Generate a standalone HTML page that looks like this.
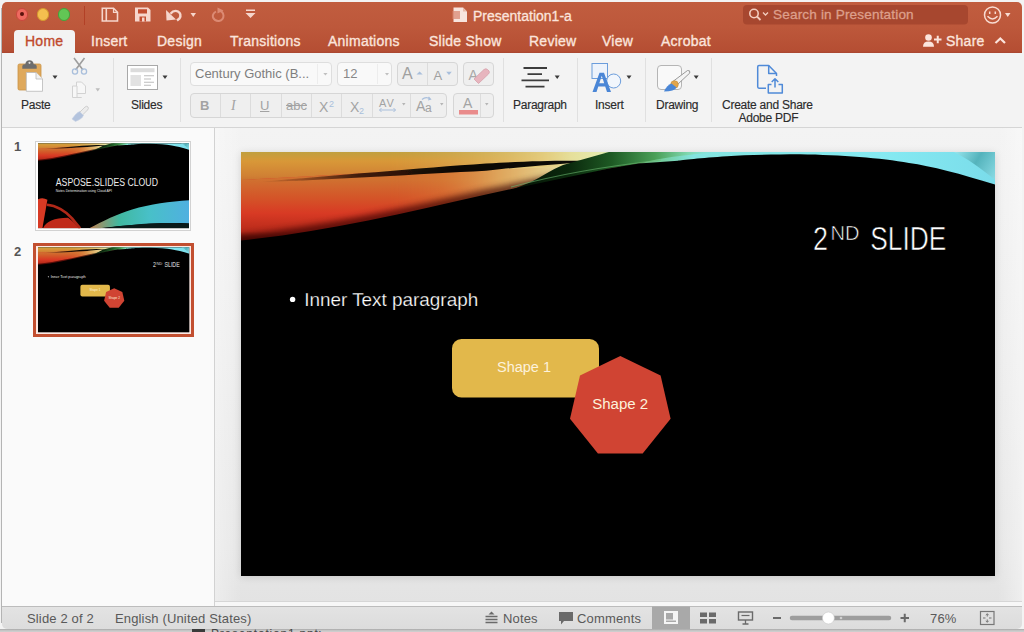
<!DOCTYPE html>
<html><head><meta charset="utf-8">
<style>
*{box-sizing:border-box;margin:0;padding:0}
html,body{width:1024px;height:632px;overflow:hidden;background:#f3f3f3;font-family:"Liberation Sans",sans-serif}
.a{position:absolute}
svg{position:absolute;overflow:visible}
#deskbot{left:0;top:629px;width:1024px;height:3px;background:linear-gradient(#a8a8a8,#c4c4c4 1.5px,#d2d2d2)}
#winshadow{left:1px;top:8px;width:1px;height:615px;background:#b4b4b4}
#win{left:2px;top:2px;width:1020px;height:627px;border-radius:5px;overflow:hidden;background:#f3f3f3}
#title{left:2px;top:2px;width:1020px;height:51px;background:linear-gradient(#c15d3f,#bd583b 25px,#b54e33 49px,#a84530 51px);border-radius:5px 5px 0 0}
.tl{width:12.5px;height:12.5px;border-radius:50%;top:8px}
.tab{top:33.3px;font-size:14px;color:#fbe4dc;white-space:nowrap;letter-spacing:0.25px;line-height:16px;-webkit-text-stroke:0.35px currentColor}
#ribbon{left:2px;top:53px;width:1020px;height:75px;background:#f3f3f3;border-bottom:1px solid #d5d5d5}
.sep{top:58px;width:1px;height:64px;background:#e0e0e0}
.lbl{top:97.5px;font-size:12px;color:#2b2b2b;white-space:nowrap;line-height:14px;letter-spacing:-0.25px;-webkit-text-stroke:0.15px currentColor}
.box{background:#f9f9f9;border:1px solid #dedede;border-radius:4px}
.btn{background:#efefef;border:1px solid #d6d6d6;border-radius:4px}
.vd{width:1px;background:#dcdcdc}
.gt{color:#7e7e7e;white-space:nowrap;line-height:14px}
#panel{left:2px;top:128px;width:212px;height:478px;background:#fafafa}
#pline{left:214px;top:128px;width:1px;height:478px;background:#d2d2d2}
#main{left:215px;top:128px;width:807px;height:473px;background:linear-gradient(90deg,rgba(255,255,255,0.35),rgba(255,255,255,0) 26px),linear-gradient(270deg,rgba(255,255,255,0.4),rgba(255,255,255,0) 24px),linear-gradient(#f3f3f3 0,#eeeeee 200px,#e7e7e7 420px,#e3e3e3 473px)}
#status{left:2px;top:606px;width:1020px;height:23px;background:linear-gradient(#e3e3e3,#dcdcdc);border-top:1px solid #bcbcbc;border-radius:0 0 5px 5px}
.st{top:611px;font-size:13px;color:#595959;white-space:nowrap;line-height:15px;letter-spacing:0.15px}
#slide{left:241px;top:152px;width:754px;height:424px;background:#000;overflow:hidden}
</style></head><body>
<div id="winshadow" class="a"></div>
<div id="deskbot" class="a"></div>
<div id="win" class="a"></div>
<div id="title" class="a"></div>
<div class="a tl" style="left:15.6px;background:#ee6a5f;border:1px solid #c9473d"></div>
<div class="a" style="left:19.8px;top:12.2px;width:4px;height:4px;border-radius:50%;background:#5a120c"></div>
<div class="a tl" style="left:36.7px;background:#f5bf4f;border:1px solid #d49a2e"></div>
<div class="a tl" style="left:57.6px;background:#62c655;border:1px solid #43a33a"></div>
<div class="a" style="left:84px;top:6px;width:1px;height:19px;background:#b24026"></div>

<div class="a" style="left:14px;top:30px;width:61px;height:24px;background:#f3f3f3;border-radius:4px 4px 0 0"></div>
<div class="a tab" style="left:25px;color:#c04a2d">Home</div>
<div class="a tab" style="left:91px">Insert</div>
<div class="a tab" style="left:157px">Design</div>
<div class="a tab" style="left:230px">Transitions</div>
<div class="a tab" style="left:328px">Animations</div>
<div class="a tab" style="left:429px">Slide Show</div>
<div class="a tab" style="left:529px">Review</div>
<div class="a tab" style="left:602px">View</div>
<div class="a tab" style="left:661px">Acrobat</div>


<!-- title bar icons -->
<svg style="left:0;top:0" width="1024" height="53">
 <g fill="none" stroke="#f6d6cc" stroke-width="1.6">
  <path d="M102.3 8.3 H113.5 L117.5 12.3 V21 H102.3 Z"/>
  <path d="M106.3 8.3 V21"/>
  <path d="M113.5 8.3 V12.3 H117.5" stroke-width="1.2"/>
 </g>
 <path fill="#f6d6cc" d="M135 7.5 H148 L150.5 10 V21.5 H135 Z"/>
 <path fill="#c24d30" d="M138 9.2 H147 V13.5 H138 Z M139.5 16.5 H146 V21.5 H139.5 Z"/>
 <path fill="#f6d6cc" d="M142 17.5 H144.5 V21.5 H142 Z"/>
 <path fill="none" stroke="#f6d6cc" stroke-width="2.4" d="M170.5 13.8 Q174 9.5 178 11.5 Q182 14 179.5 18.5 L177 20.5"/>
 <path fill="#f6d6cc" d="M166 10 L166.5 20.5 L176 19.5 Z"/>
 <path fill="#f6d6cc" d="M190.5 13 H196 L193.25 17 Z"/>
 <path fill="none" stroke="#dc8a73" stroke-width="2" d="M216 11.5 Q212 14 213 17.5 Q215 21.5 219 21 Q223.5 20 223.5 15.5 Q223 11 218.5 10.5"/>
 <path fill="#dc8a73" d="M217.5 7.5 L223.5 10.5 L217.5 13.5 Z"/>
 <path fill="#f6d6cc" d="M246 9.5 H255 V11 H246 Z M245.5 13 H255.5 L250.5 18 Z"/>
 <!-- title doc icon -->
 <path fill="#f7e4de" d="M453.5 7.5 H463 L467 11.5 V22 H453.5 Z"/>
 <path fill="#e9b8a8" d="M463 7.5 V11.5 H467 Z"/>
 <path fill="#d98a74" d="M452.5 11 H460 V19 H452.5 Z" opacity="0.75"/>
 <!-- search -->
 <rect x="743" y="5" width="225" height="19.5" rx="4" fill="#a7472f"/>
 <circle cx="754" cy="13.5" r="4.2" fill="none" stroke="#f3cdbf" stroke-width="1.6"/>
 <path d="M757 16.5 L760.5 20" stroke="#f3cdbf" stroke-width="1.8"/>
 <path d="M763 12.5 L765.5 15 L768 12.5" fill="none" stroke="#f3cdbf" stroke-width="1.3"/>
 <!-- smiley -->
 <circle cx="992.5" cy="15" r="8" fill="none" stroke="#f8dcd2" stroke-width="1.5"/>
 <path d="M989.7 11.5 V14 M995.3 11.5 V14" stroke="#f8dcd2" stroke-width="1.5"/>
 <path d="M987.5 16.3 Q992.5 21.5 997.5 16.3" fill="none" stroke="#f8dcd2" stroke-width="1.5"/>
 <path fill="#f8dcd2" d="M1005 13 H1010.5 L1007.75 17 Z"/>
 <!-- share -->
 <circle cx="928.5" cy="37.5" r="3.3" fill="#fbe4dc"/>
 <path fill="#fbe4dc" d="M923 46.8 Q923 41.5 928.5 41.5 Q934 41.5 934 46.8 Z"/>
 <path d="M934 39.5 H941.5 M937.75 35.7 V43.3" stroke="#fbe4dc" stroke-width="2"/>
 <path d="M995.5 43 L1000.3 38.5 L1005 43" fill="none" stroke="#fbe4dc" stroke-width="2.2"/>
</svg>
<div class="a" style="left:473px;top:8.5px;font-size:14px;line-height:14px;color:#fbe4dc;letter-spacing:0px;-webkit-text-stroke:0.3px currentColor">Presentation1-a</div>
<div class="a" style="left:773px;top:8px;font-size:13.6px;line-height:14px;color:#dd9f8b;letter-spacing:0.15px;-webkit-text-stroke:0.3px currentColor">Search in Presentation</div>
<div class="a tab" style="left:946px">Share</div>

<div id="ribbon" class="a"></div>

<!-- ribbon separators -->
<div class="a sep" style="left:113px"></div>
<div class="a sep" style="left:180px"></div>
<div class="a sep" style="left:503px"></div>
<div class="a sep" style="left:577px"></div>
<div class="a sep" style="left:645px"></div>
<div class="a sep" style="left:711px"></div>
<svg style="left:0;top:0" width="1024" height="130">
 <!-- paste -->
 <rect x="18" y="64" width="23" height="26" rx="1.5" fill="#dfa95c" stroke="#c99245" stroke-width="0.8"/>
 <path d="M22.3 68.8 V66.3 Q22.3 64.2 24.5 64.2 H25.3 Q25.8 60.3 29.5 60.3 Q33.2 60.3 33.7 64.2 H34.5 Q36.7 64.2 36.7 66.3 V68.8 Z" fill="#6d6d6d"/>
 <circle cx="29.5" cy="62.8" r="1.1" fill="#e0e0e0"/>
 <path d="M26.3 72.5 H36 L42.5 79 V91.3 H26.3 Z" fill="#ffffff" stroke="#b9b9b9" stroke-width="0.8"/>
 <path d="M36 72.5 V79 H42.5" fill="#f2f2f2" stroke="#b9b9b9" stroke-width="0.8"/>
 <path d="M52.5 75.5 H57.5 L55 79 Z" fill="#3a3a3a"/>
 <!-- scissors -->
 <path d="M74 58 L83 70 M84.5 58 L75.5 70" stroke="#9d9d9d" stroke-width="1.6"/>
 <circle cx="75" cy="71.5" r="2.6" fill="none" stroke="#a9bfdc" stroke-width="1.3"/>
 <circle cx="84" cy="71.5" r="2.6" fill="none" stroke="#a9bfdc" stroke-width="1.3"/>
 <!-- copy -->
 <path d="M76.5 82 H81.5 L85.5 86 V93.5 H76.5 Z" fill="#f7f7f7" stroke="#d2d2d2" stroke-width="1"/>
 <path d="M72.5 86 H77 V97.5 H81.5 V97.5 H72.5 Z" fill="#f7f7f7" stroke="#d2d2d2" stroke-width="1"/>
 <path d="M95.5 88.2 H100 L97.75 91.5 Z" fill="#bdbdbd"/>
 <!-- brush -->
 <path d="M80 112 L85 107 Q87 105.5 88 107 Q89 108.5 87.5 110 L82.5 115" fill="#ececec" stroke="#cfcfcf" stroke-width="1"/>
 <path d="M72 119 Q76 113 79.5 111.5 L83.5 115.5 Q82 119 75.5 121.5 Z" fill="#b3c3dd" stroke="#c8d2e4" stroke-width="0.6"/>
 <!-- slides icon -->
 <rect x="127.5" y="65.5" width="30" height="24" fill="#ffffff" stroke="#a8a8a8" stroke-width="1"/>
 <rect x="130.5" y="68.2" width="24" height="4" fill="#dcdcdc"/>
 <rect x="130.5" y="75" width="10.5" height="11" fill="#e2e2e2"/>
 <path d="M144 75.8 H154 M144 79 H151 M144 82.2 H154 M144 85.3 H151" stroke="#bdbdbd" stroke-width="1.1"/>
 <path d="M162.5 75.5 H167.5 L165 79 Z" fill="#3a3a3a"/>
 <!-- paragraph -->
 <path d="M523.5 68 H547 M527.5 74.2 H542 M521.5 80.3 H549 M525.5 86.6 H544.5" stroke="#3c3c3c" stroke-width="1.8"/>
 <path d="M554.7 75.5 H559.7 L557.2 79 Z" fill="#3a3a3a"/>
 <!-- insert -->
 <rect x="592" y="63.5" width="15.5" height="15" fill="#edf3fb" stroke="#6b9ddc" stroke-width="1"/>
 <circle cx="613.7" cy="81" r="7" fill="#f1f6fc" stroke="#6b9ddc" stroke-width="1"/>
 <path d="M592.5 92 L599.5 72.8 H604 L611 92 H607 L605.2 86.5 H598.3 L596.5 92 Z M599.3 83.3 H604.2 L601.75 75.8 Z" fill="#4a86d6" fill-rule="evenodd"/>
 <path d="M626.5 75.5 H631.5 L629 79 Z" fill="#3a3a3a"/>
 <!-- drawing -->
 <rect x="657.5" y="65.5" width="24" height="24" rx="3.5" fill="#f9f9f9" stroke="#b5b5b5" stroke-width="1"/>
 <path d="M687.5 70.5 Q690.5 70 689.8 73 L677.5 84.5 L673.5 81 Z" fill="#f4f4f4" stroke="#8e8e8e" stroke-width="0.9"/>
 <circle cx="674.5" cy="84.5" r="3.8" fill="#e1a54b" stroke="#c58b35" stroke-width="0.6"/>
 <path d="M664 91.5 Q667 85 671.5 83.5 L676.5 87.5 Q674.5 91.5 664 91.5 Z" fill="#4a86d6"/>
 <path d="M693.7 75.5 H698.7 L696.2 79 Z" fill="#3a3a3a"/>
 <!-- acrobat -->
 <g fill="none" stroke="#4f8ad8" stroke-width="1.5" stroke-linejoin="round">
  <path d="M766 88.2 H759 Q757.7 88.2 757.7 86.8 V67 Q757.7 65.6 759 65.6 H768.7 L776.5 73.6 V76"/>
  <path d="M768.7 65.6 V73.6 H776.5"/>
  <path d="M771.5 84.5 H768.3 V93 H782.3 V84.5 H778.5"/>
  <path d="M775 87.5 V79 M771.7 82 L775 78.7 L778.3 82"/>
 </g>
</svg>
<div class="a lbl" style="left:21px">Paste</div>
<div class="a lbl" style="left:131px">Slides</div>
<div class="a lbl" style="left:513px">Paragraph</div>
<div class="a lbl" style="left:595px">Insert</div>
<div class="a lbl" style="left:656px">Drawing</div>
<div class="a lbl" style="left:722px">Create and Share</div>
<div class="a lbl" style="left:738.5px;top:110.5px">Adobe PDF</div>
<!-- font group -->
<div class="a box" style="left:190px;top:62px;width:142px;height:24px"></div>
<div class="a vd" style="left:317px;top:64px;height:20px;background:#ededed"></div>
<div class="a gt" style="left:195px;top:67px;font-size:13px">Century Gothic (B...</div>
<div class="a box" style="left:337px;top:62px;width:55px;height:24px"></div>
<div class="a vd" style="left:377px;top:64px;height:20px;background:#ededed"></div>
<div class="a gt" style="left:343px;top:67px;font-size:13px;color:#888">12</div>
<div class="a btn" style="left:397px;top:62px;width:61px;height:24px"></div>
<div class="a vd" style="left:427px;top:63px;height:22px"></div>
<div class="a gt" style="left:402px;top:66px;font-size:16px;line-height:16px;color:#a0a0a0">A</div>
<div class="a gt" style="left:433.5px;top:69px;font-size:13px;line-height:13px;color:#a0a0a0">A</div>
<div class="a btn" style="left:463px;top:62px;width:31px;height:24px"></div>
<div class="a btn" style="left:190px;top:93px;width:257px;height:25px"></div>
<div class="a vd" style="left:220px;top:94px;height:23px"></div>
<div class="a vd" style="left:250px;top:94px;height:23px"></div>
<div class="a vd" style="left:281px;top:94px;height:23px"></div>
<div class="a vd" style="left:311px;top:94px;height:23px"></div>
<div class="a vd" style="left:341px;top:94px;height:23px"></div>
<div class="a vd" style="left:372px;top:94px;height:23px"></div>
<div class="a vd" style="left:410px;top:94px;height:23px"></div>
<div class="a btn" style="left:453px;top:93px;width:41px;height:25px"></div>
<div class="a vd" style="left:480px;top:94px;height:23px"></div>
<div class="a gt" style="left:200px;top:99px;font-size:13px;font-weight:bold;color:#a3a3a3">B</div>
<div class="a gt" style="left:231px;top:99px;font-size:14px;font-style:italic;font-family:'Liberation Serif';color:#a3a3a3">I</div>
<div class="a gt" style="left:260px;top:99px;font-size:13px;color:#a3a3a3;text-decoration:underline">U</div>
<div class="a gt" style="left:286px;top:99px;font-size:13px;color:#a3a3a3;text-decoration:line-through">abc</div>
<div class="a gt" style="left:319px;top:100px;font-size:14px;color:#a3a3a3">X</div>
<div class="a gt" style="left:329px;top:97px;font-size:9px;color:#a9bfdc">2</div>
<div class="a gt" style="left:350px;top:100px;font-size:14px;color:#a3a3a3">X</div>
<div class="a gt" style="left:359px;top:104px;font-size:9px;color:#a9bfdc">2</div>
<div class="a gt" style="left:379px;top:96px;font-size:11px;color:#a3a3a3;letter-spacing:1px">AV</div>
<div class="a gt" style="left:416px;top:99px;font-size:14px;color:#a3a3a3">A</div>
<div class="a gt" style="left:425px;top:101px;font-size:12px;color:#a3a3a3">a</div>
<div class="a gt" style="left:463px;top:96px;font-size:14px;color:#a3a3a3">A</div>
<svg style="left:0;top:0" width="1024" height="130">
 <path d="M323.3 73 H327.5 L325.4 75.5 Z M385 73 H389 L387 75.5 Z" fill="#c0c0c0"/>
 <path d="M416.5 74.5 L419.6 71.5 L422.7 74.5 Z" fill="#a9bfdc"/>
 <path d="M446.2 71.8 H451.8 L449 75 Z" fill="#a9bfdc"/>
 <path d="M379.5 110 H395.5 M381.5 108 L379.5 110 L381.5 112 M393.5 108 L395.5 110 L393.5 112" fill="none" stroke="#a9bfdc" stroke-width="1"/>
 <path d="M402 103 H405.5 L403.75 105.5 Z M440 103 H443.5 L441.75 105.5 Z M485 103 H488.5 L486.75 105.5 Z" fill="#b5b5b5"/>
 <path d="M422 99.5 Q426 96 430 99 M428.5 97 L430.5 99.2 L428 100" fill="none" stroke="#a9bfdc" stroke-width="1.2"/>
 <rect x="459" y="110" width="19" height="4.5" fill="#e98b8b"/>
 <text x="468.5" y="79.5" font-family="Liberation Sans" font-size="14" fill="#a8a8a8">A</text>
 <path d="M474 79 L484 69.5 Q486 68 487.5 69.5 L489 71 Q490 72.5 488.5 74 L478.5 83.5 Z" fill="#e7b5be" stroke="#d6a0aa" stroke-width="0.8"/>
</svg>

<div id="panel" class="a"></div>
<div id="pline" class="a"></div>
<div id="main" class="a"></div>
<div class="a" style="left:215px;top:601px;width:807px;height:1px;background:#d6d6d6"></div>
<div class="a" style="left:215px;top:602px;width:807px;height:4px;background:#f7f7f7"></div>
<div id="status" class="a"></div>

<svg style="left:0;top:0" width="1024" height="632">
 <!-- notes icon -->
 <path d="M491.5 611.5 L488.5 614.5 H494.5 Z" fill="#6a6a6a"/>
 <path d="M485.5 616.5 H497.5 M485.5 619.5 H497.5 M485.5 622.5 H497.5" stroke="#6a6a6a" stroke-width="1.3"/>
 <!-- comments icon -->
 <path d="M559 612 H573 V621 H564 L561 624.5 V621 H559 Z" fill="#6a6a6a"/>
 <!-- normal view (active) -->
 <rect x="652" y="606.5" width="38" height="22.5" fill="#a9a9a9"/>
 <rect x="664" y="611" width="14" height="13" fill="#f5f5f5"/>
 <rect x="666" y="613" width="7" height="6.5" fill="#a9a9a9"/>
 <rect x="666" y="620.5" width="10" height="1.5" fill="#a9a9a9"/>
 <!-- sorter -->
 <rect x="700" y="612.5" width="7" height="4.5" fill="#6a6a6a"/>
 <rect x="709" y="612.5" width="7" height="4.5" fill="#6a6a6a"/>
 <rect x="700" y="619" width="7" height="4.5" fill="#6a6a6a"/>
 <rect x="709" y="619" width="7" height="4.5" fill="#6a6a6a"/>
 <!-- presenter -->
 <rect x="738.5" y="612" width="14" height="8" fill="none" stroke="#6a6a6a" stroke-width="1.4"/>
 <path d="M741.5 615.5 H749.5" stroke="#6a6a6a" stroke-width="1.2"/>
 <path d="M745.5 620 V623.5 M742.5 624 H748.5" stroke="#6a6a6a" stroke-width="1.3"/>
 <!-- zoom -->
 <path d="M773 618 H781" stroke="#6a6a6a" stroke-width="2"/>
 <path d="M792 618 H889" stroke="#9d9d9d" stroke-width="4.5" stroke-linecap="round"/>
 <circle cx="841" cy="618" r="1.3" fill="#d0d0d0"/>
 <circle cx="828.4" cy="618" r="6" fill="#ffffff" stroke="#c8c8c8" stroke-width="0.6"/>
 <path d="M900.5 618 H909 M904.75 613.8 V622.2" stroke="#6a6a6a" stroke-width="2"/>
 <!-- fit -->
 <rect x="980.5" y="611.5" width="13.5" height="13" fill="none" stroke="#777" stroke-width="1.2"/>
 <path d="M987.25 614 V616.5 M987.25 619.5 V622 M983 618 H985.5 M989 618 H991.5" stroke="#777" stroke-width="1.1"/>
 <path d="M985.8 615.2 L987.25 613.6 L988.7 615.2 M985.8 620.8 L987.25 622.4 L988.7 620.8" fill="none" stroke="#777" stroke-width="0.9"/>
</svg>
<div class="a st" style="left:503px">Notes</div>
<div class="a st" style="left:577px">Comments</div>
<div class="a st" style="left:930px">76%</div>
<div class="a" style="left:192px;top:629px;width:13px;height:3px;background:#3a3a3a"></div>
<div class="a" style="left:211px;top:629px;width:110px;height:3px;overflow:hidden"><div style="position:absolute;left:0;top:-1.5px;font-size:12px;line-height:12px;color:#444;white-space:nowrap;letter-spacing:0.8px">Presentation1.pptx</div></div>
<div class="a st" style="left:27px">Slide 2 of 2</div>
<div class="a st" style="left:115px">English (United States)</div>


<svg style="left:0;top:0;width:0;height:0" width="0" height="0">
 <defs>
  <linearGradient id="gTop" x1="0" y1="0" x2="754" y2="0" gradientUnits="userSpaceOnUse">
   <stop offset="0" stop-color="#c09a40"/>
   <stop offset="0.2" stop-color="#d6a548"/>
   <stop offset="0.4" stop-color="#e8d488"/>
   <stop offset="0.48" stop-color="#e4ecb0"/>
   <stop offset="0.5" stop-color="#5aa060"/>
   <stop offset="0.55" stop-color="#70c890"/>
   <stop offset="0.6" stop-color="#84e4e0"/>
   <stop offset="0.85" stop-color="#86eaf2"/>
   <stop offset="1" stop-color="#7adcea"/>
  </linearGradient>
  <linearGradient id="gRed" x1="0" y1="22" x2="20" y2="90" gradientUnits="userSpaceOnUse">
   <stop offset="0" stop-color="#d98a3c"/>
   <stop offset="0.45" stop-color="#d9502c"/>
   <stop offset="0.8" stop-color="#c0301c"/>
   <stop offset="1" stop-color="#5a0c06"/>
  </linearGradient>
  <linearGradient id="gFade" x1="0" y1="0" x2="370" y2="0" gradientUnits="userSpaceOnUse">
   <stop offset="0" stop-color="#e0b060" stop-opacity="0"/>
   <stop offset="0.45" stop-color="#e0a050" stop-opacity="0.15"/>
   <stop offset="0.8" stop-color="#e3c06a" stop-opacity="0.85"/>
   <stop offset="1" stop-color="#e6d070" stop-opacity="1"/>
  </linearGradient>
  <linearGradient id="gGreen" x1="262" y1="0" x2="480" y2="0" gradientUnits="userSpaceOnUse">
   <stop offset="0" stop-color="#050f05"/>
   <stop offset="0.3" stop-color="#0a280c"/>
   <stop offset="0.5" stop-color="#1e5a24"/>
   <stop offset="0.7" stop-color="#4aa058"/>
   <stop offset="0.85" stop-color="#80d8b0"/>
   <stop offset="1" stop-color="#90eae0" stop-opacity="0"/>
  </linearGradient>
  <linearGradient id="gTeal" x1="713" y1="0" x2="754" y2="25" gradientUnits="userSpaceOnUse">
   <stop offset="0" stop-color="#a0e8ee"/>
   <stop offset="0.5" stop-color="#4aa8b0"/>
   <stop offset="1" stop-color="#8ad8e0"/>
  </linearGradient>
  <linearGradient id="gBotR" x1="0" y1="280" x2="220" y2="424" gradientUnits="userSpaceOnUse">
   <stop offset="0" stop-color="#e0402a"/>
   <stop offset="1" stop-color="#c02818"/>
  </linearGradient>
  <linearGradient id="gBotT" x1="256" y1="0" x2="754" y2="0" gradientUnits="userSpaceOnUse">
   <stop offset="0" stop-color="#c08050"/>
   <stop offset="0.3" stop-color="#40b8a0"/>
   <stop offset="0.6" stop-color="#48c0c8"/>
   <stop offset="1" stop-color="#50b0e0"/>
  </linearGradient>
  <symbol id="swoosh" viewBox="0 0 754 424">
   <rect x="0" y="0" width="754" height="100" fill="url(#gTop)"/>
   <path d="M0 0 H330 V14 C250 16 120 22 0 30 Z" fill="url(#gGoldV)" mask="url(#mLeft)"/>
   <path d="M0 28 C80 24 170 17 245 17.5 C300 16 340 14 368 14 L380 14 V100 H0 Z" fill="url(#gBandH)"/>
   <path d="M0 28 C80 24 170 17 245 17.5 C300 16 340 14 368 14 L380 14 V100 H0 Z" fill="url(#gRedV)" mask="url(#mLeft)"/>
   <path d="M400 10 L245 42.4 C160 62 80 80 -5 89" fill="none" stroke="#300604" stroke-width="10" opacity="0.7" filter="url(#blur3)"/>
   <path d="M22 29.5 C90 24 180 16 245 11.5 C290 9 320 8.5 345 9 L345 10.5 C320 11.5 290 14 245 18.8 C180 22 90 28 22 30 Z" fill="url(#gLine)" filter="url(#blur1)"/>
   <path d="M250 46 L290 30 C300 25 310 18 322 13 L368 0 H480 C440 3 420 6 398 11.6 L368 16.5 Z" fill="url(#gGreen)"/>
   <path d="M713 0 H754 V28 C740 16 725 6 713 0 Z" fill="url(#gTeal)" opacity="0.8"/>
   <path d="M270 35 C320 22 360 15 420 8" fill="none" stroke="#6ab870" stroke-width="1.2" opacity="0.6"/>
   <path d="M0 88.5 C80 80 160 62 245 42.4 L368 16.5 L398 11.6 L437 8.7 C440 8 460 6 486 4.2 C505 3 530 2.5 559 2.3 C600 3 640 6 668 11 C690 14 720 22 754 32.5 V424 H0 Z" fill="#000"/>
  </symbol>
  <linearGradient id="gLine" x1="20" y1="0" x2="345" y2="0" gradientUnits="userSpaceOnUse">
   <stop offset="0" stop-color="#200804" stop-opacity="0"/>
   <stop offset="0.3" stop-color="#100402" stop-opacity="0.75"/>
   <stop offset="0.6" stop-color="#000" stop-opacity="0.95"/>
   <stop offset="1" stop-color="#000" stop-opacity="0.95"/>
  </linearGradient>
  <linearGradient id="gGoldV" x1="0" y1="0" x2="0" y2="30" gradientUnits="userSpaceOnUse">
   <stop offset="0" stop-color="#c0a040"/>
   <stop offset="0.3" stop-color="#d89838"/>
   <stop offset="0.8" stop-color="#d08034"/>
   <stop offset="1" stop-color="#c87030"/>
  </linearGradient>
  <linearGradient id="gBandH" x1="0" y1="0" x2="368" y2="0" gradientUnits="userSpaceOnUse">
   <stop offset="0" stop-color="#d8402a"/>
   <stop offset="0.35" stop-color="#d8582c"/>
   <stop offset="0.55" stop-color="#e08a40"/>
   <stop offset="0.7" stop-color="#e8c878"/>
   <stop offset="0.85" stop-color="#e8e0a0"/>
   <stop offset="1" stop-color="#e0e8b0"/>
  </linearGradient>
  <linearGradient id="gRedV" x1="0" y1="28" x2="0" y2="88.5" gradientUnits="userSpaceOnUse">
   <stop offset="0" stop-color="#d07030"/>
   <stop offset="0.3" stop-color="#d45428"/>
   <stop offset="0.55" stop-color="#d83a24"/>
   <stop offset="0.85" stop-color="#b82a1a"/>
   <stop offset="1" stop-color="#601008"/>
  </linearGradient>
  <linearGradient id="gMaskH" x1="0" y1="0" x2="330" y2="0" gradientUnits="userSpaceOnUse">
   <stop offset="0" stop-color="#fff"/>
   <stop offset="0.45" stop-color="#fff"/>
   <stop offset="1" stop-color="#000"/>
  </linearGradient>
  <mask id="mLeft" maskUnits="userSpaceOnUse" x="0" y="0" width="754" height="424">
   <rect x="0" y="0" width="754" height="424" fill="url(#gMaskH)"/>
  </mask>
  <clipPath id="cBand">
   <path d="M0 0 H380 V14 L368 16.5 L245 42.4 C160 62 80 80 0 88.5 Z"/>
  </clipPath>
  <filter id="blur3" x="-10%" y="-50%" width="120%" height="200%"><feGaussianBlur stdDeviation="3"/></filter>
  <filter id="blur1" x="-10%" y="-100%" width="120%" height="300%"><feGaussianBlur stdDeviation="0.5"/></filter>
  <symbol id="slide2" viewBox="0 0 754 424">
   <rect width="754" height="424" fill="#000"/>
   <use href="#swoosh" x="0" y="0" width="754" height="424"/>
   <g font-family="Liberation Sans" fill="#ffffff" stroke="#000" stroke-width="0.6">
    <text x="572" y="98.2" font-size="34" textLength="15" lengthAdjust="spacingAndGlyphs">2</text>
    <text x="589.5" y="88" font-size="20" textLength="29" lengthAdjust="spacingAndGlyphs">ND</text>
    <text x="629.3" y="98.2" font-size="34" textLength="76" lengthAdjust="spacingAndGlyphs">SLIDE</text>
    <circle cx="51.6" cy="147.4" r="2.7" stroke="none"/>
    <text x="63.2" y="154" font-size="18.5" stroke-width="0.25" textLength="174" lengthAdjust="spacingAndGlyphs">Inner Text paragraph</text>
   </g>
   <rect x="211" y="187" width="147" height="58.5" rx="9.5" fill="#e2b84b"/>
   <polygon points="379.3,204.1 419.6,223.4 429.6,266.8 401.7,301.6 356.9,301.6 329.0,266.8 339.0,223.4" fill="#d04433"/>
   <g font-family="Liberation Sans" fill="#fdf2dc" font-size="15.5">
    <text x="256" y="220.2" textLength="54" lengthAdjust="spacingAndGlyphs">Shape 1</text>
    <text x="351.2" y="257.2" textLength="56" lengthAdjust="spacingAndGlyphs">Shape 2</text>
   </g>
  </symbol>
  <symbol id="slide1" viewBox="0 0 754 424">
   <rect width="754" height="424" fill="#000"/>
   <use href="#swoosh" x="0" y="0" width="754" height="424"/>
   <path d="M25 424 C40 390 80 372 150 372 C170 385 190 405 205 424 Z" fill="#c02a1a"/>
   <path d="M44 307 C90 310 140 340 170 375 C185 395 200 410 210 424" stroke="#b02818" stroke-width="13" fill="none"/>
   <path d="M0 279 Q25 268 47 282 L22 424 H0 Z" fill="#d83a24"/>
   <path d="M256 424 C320 390 400 350 470 330 C560 305 660 290 754 285 V400 C680 395 620 398 560 402 C460 408 380 415 310 424 Z" fill="url(#gBotT)"/>
   <path d="M330 424 C420 410 540 400 620 398 C680 397 720 398 754 400 V424 Z" fill="#0a1a1a"/>
   <g font-family="Liberation Sans" fill="#e6e6e6">
    <text x="89" y="214" font-size="52" fill="#ececec" textLength="510" lengthAdjust="spacingAndGlyphs">ASPOSE.SLIDES CLOUD</text>
    <text x="89" y="242" font-size="14" textLength="281" lengthAdjust="spacingAndGlyphs">Notes Determination using Cloud API</text>
   </g>
  </symbol>
 </defs>
</svg>
<div class="a" style="left:241px;top:152px;width:754px;height:424px;box-shadow:0 1px 8px rgba(0,0,0,0.13)"></div>
<svg style="left:241px;top:152px" width="754" height="424"><use href="#slide2" width="754" height="424"/></svg>
<!-- thumbnails -->
<div class="a" style="left:14px;top:140px;font-size:13px;font-weight:bold;color:#555;line-height:14px">1</div>
<div class="a" style="left:35px;top:140.5px;width:156px;height:90.5px;border:1px solid #d2d2d2;background:#fff"></div>
<svg style="left:38px;top:142.5px" width="151" height="85.5"><use href="#slide1" width="151" height="85.5"/></svg>
<div class="a" style="left:14px;top:245px;font-size:13px;font-weight:bold;color:#555;line-height:14px">2</div>
<div class="a" style="left:33px;top:243px;width:161px;height:93.5px;border:3px solid #c24f30;background:#fbe9e4"></div>
<svg style="left:37.5px;top:247px" width="151.5" height="85.6"><use href="#slide2" width="151.5" height="85.6"/></svg>
</body></html>
